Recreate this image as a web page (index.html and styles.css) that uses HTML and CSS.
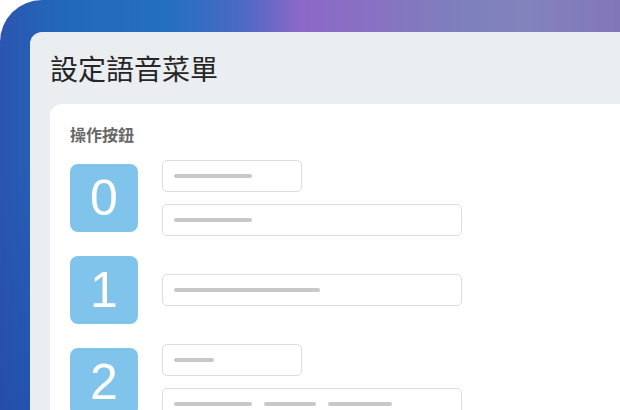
FILE: index.html
```html
<!DOCTYPE html>
<html lang="zh-Hant">
  <head>
    <meta charset="UTF-8" />
    <meta name="viewport" content="width=device-width, initial-scale=1.0" />
    <title>設定語音菜單</title>
    <link rel="stylesheet" href="styles.css">
  </head>
  <body>
    <div class="backdrop">
      <div class="panel">
        <h1 class="panel-title">設定語音菜單</h1>
        <div class="card">
          <h2 class="card-title">操作按鈕</h2>
          <div class="key-list">
            <div class="key-row">
              <div class="key-badge">0</div>
              <div class="fields">
                <div class="field short"><span class="bar" style="width: 78px"></span></div>
                <div class="field"><span class="bar" style="width: 78px"></span></div>
              </div>
            </div>

            <div class="key-row">
              <div class="key-badge">1</div>
              <div class="fields">
                <div class="field"><span class="bar" style="width: 146px"></span></div>
              </div>
            </div>

            <div class="key-row">
              <div class="key-badge">2</div>
              <div class="fields">
                <div class="field short"><span class="bar" style="width: 40px"></span></div>
                <div class="field">
                  <span class="bar" style="width: 78px"></span>
                  <span class="bar" style="width: 52px"></span>
                  <span class="bar" style="width: 64px"></span>
                </div>
              </div>
            </div>
          </div>
        </div>
      </div>
    </div>
  </body>
</html>
```

FILE: styles.css
```css
* {
  box-sizing: border-box;
}
body {
  margin: 0;
  background-color: #fff;
  font-family: "Noto Sans CJK TC", "Noto Sans", sans-serif;
  overflow: hidden;
}
.backdrop {
  position: relative;
  height: 100vh;
  padding: 32px 0 0 30px;
  border-top-left-radius: 42px;
  overflow: hidden;
  background:
    linear-gradient(180deg, rgba(255, 255, 255, 0) 40%, rgba(10, 40, 140, 0.18) 100%),
    linear-gradient(90deg, #2c55b0 0, #2268ba 60px, #2470be 170px, #4f68c6 245px, #8c68c8 300px, #8872c2 380px, #7d80bc 460px, #8282bd 530px, #8276b9 620px);
}
.panel {
  height: 100%;
  padding: 18px 0 0 20px;
  background-color: #ebeef1;
  border-top-left-radius: 12px;
}
.panel-title {
  margin: 0 0 18px;
  font-size: 28px;
  line-height: 36px;
  font-weight: 400;
  color: #262626;
}
.card {
  height: 100%;
  padding: 20px 0 0 20px;
  background-color: #fff;
  border-top-left-radius: 12px;
}
.card-title {
  margin: 0 0 16px;
  font-size: 16px;
  line-height: 20px;
  font-weight: 700;
  color: #666;
}
.key-list {
  display: flex;
  flex-direction: column;
  gap: 20px;
}
.key-row {
  display: flex;
  align-items: center;
  gap: 24px;
}
.key-badge {
  width: 68px;
  height: 68px;
  flex: none;
  display: flex;
  justify-content: center;
  align-items: center;
  border-radius: 8px;
  background-color: #80c4ec;
  color: #fff;
  font-family: "Liberation Sans", Arial, sans-serif;
  font-size: 50px;
}
.fields {
  display: flex;
  flex-direction: column;
  gap: 12px;
}
.field {
  width: 300px;
  height: 32px;
  display: flex;
  align-items: center;
  gap: 12px;
  padding: 0 11px;
  border: 1px solid #dcdcdc;
  border-radius: 5px;
  background-color: #fff;
}
.field.short {
  width: 140px;
}
.bar {
  height: 4px;
  border-radius: 2px;
  background-color: #c8c8c8;
}
```
